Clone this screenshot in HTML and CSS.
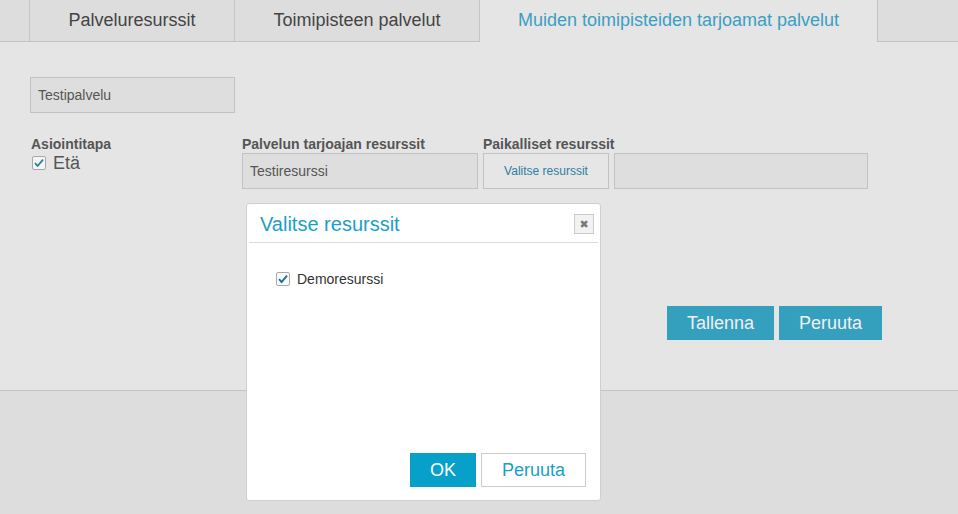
FILE: index.html
```html
<!DOCTYPE html>
<html>
<head>
<meta charset="utf-8">
<link rel="stylesheet" href="styles.css">
</head>
<body>
<div class="tabs">
  <div class="tab-spacer"></div>
  <div class="tab tab-1">Palveluresurssit</div>
  <div class="tab tab-2">Toimipisteen palvelut</div>
  <div class="tab tab-active">Muiden toimipisteiden tarjoamat palvelut</div>
</div>
<div class="panel">
  <div class="field-name">Testipalvelu</div>
  <div class="fields">
    <div class="col col-1">
      <div class="label">Asiointitapa</div>
      <div class="check-row">
        <svg class="cb" width="14" height="14" viewBox="0 0 14 14"><rect x="0.5" y="0.5" width="13" height="13" rx="1.5" fill="#f4f4f4" stroke="#a8a8a8"/><path d="M3 7.2 L5.6 10 L11 3.6" fill="none" stroke="#2a7fa0" stroke-width="1.8"/></svg>
        <span class="eta">Etä</span>
      </div>
    </div>
    <div class="col col-2">
      <div class="label">Palvelun tarjoajan resurssit</div>
      <div class="box box-wide">Testiresurssi</div>
    </div>
    <div class="col col-3">
      <div class="label">Paikalliset resurssit</div>
      <div class="row-3">
        <div class="btn-select">Valitse resurssit</div>
        <div class="box box-empty"></div>
      </div>
    </div>
  </div>
  <div class="actions">
    <div class="btn-main">Tallenna</div>
    <div class="btn-main btn-main-2">Peruuta</div>
  </div>
</div>
<div class="modal">
  <div class="modal-head">
    <span class="modal-title">Valitse resurssit</span>
    <span class="modal-close">✖</span>
  </div>
  <div class="modal-body">
    <div class="check-row2">
      <svg class="cb" width="14" height="14" viewBox="0 0 14 14"><rect x="0.5" y="0.5" width="13" height="13" rx="1.5" fill="#fafafa" stroke="#a8a8a8"/><path d="M3 7.2 L5.6 10 L11 3.6" fill="none" stroke="#1d6f95" stroke-width="1.9"/></svg>
      <span class="demo">Demoresurssi</span>
    </div>
  </div>
  <div class="modal-foot">
    <div class="btn-ok">OK</div>
    <div class="btn-cancel">Peruuta</div>
  </div>
</div>
</body>
</html>
```
FILE: styles.css
```css
html, body {
  margin: 0;
  padding: 0;
}
body {
  background: #dddddd;
  font-family: "Liberation Sans", Arial, sans-serif;
  width: 958px;
  height: 514px;
  overflow: hidden;
  position: relative;
}
.tabs {
  display: flex;
  height: 41px;
  border-bottom: 1px solid #c2c2c2;
  background: #dddddd;
}
.tab-spacer {
  width: 29px;
}
.tab {
  box-sizing: border-box;
  height: 41px;
  border-left: 1px solid #c4c4c4;
  display: flex;
  align-items: center;
  justify-content: center;
  font-size: 18px;
  color: #444;
  padding-bottom: 1px;
}
.tab-1 { width: 205px; }
.tab-2 { width: 245px; }
.tab-active {
  width: 399px;
  height: 42px;
  margin-bottom: -1px;
  background: #e5e5e5;
  border-right: 1px solid #c4c4c4;
  color: #3a9fc2;
  padding-bottom: 2px;
}
.panel {
  box-sizing: border-box;
  height: 349px;
  background: #e5e5e5;
  border-bottom: 1px solid #c2c2ca;
  padding: 35px 0 0 30px;
}
.field-name {
  box-sizing: border-box;
  width: 205px;
  height: 36px;
  background: #dedede;
  border: 1px solid #c2c2c2;
  font-size: 14px;
  color: #555;
  padding-left: 7px;
  line-height: 34px;
}
.fields {
  display: flex;
  margin-top: 22px;
}
.label {
  font-size: 14px;
  font-weight: bold;
  color: #555;
  line-height: 18px;
  height: 18px;
}
.col-1 { width: 211px; padding-left: 1px; }
.col-2 { width: 241px; }
.check-row {
  display: flex;
  align-items: center;
  height: 16px;
  margin-top: 2px;
  padding-left: 1px;
}
.eta {
  font-size: 18px;
  color: #555;
  margin-left: 7px;
  line-height: 16px;
}
.box {
  box-sizing: border-box;
  height: 36px;
  background: #dedede;
  border: 1px solid #c2c2c2;
}
.box-wide {
  width: 236px;
  font-size: 14px;
  color: #555;
  padding-left: 7px;
  line-height: 34px;
}
.row-3 {
  display: flex;
  gap: 5px;
}
.btn-select {
  box-sizing: border-box;
  width: 126px;
  height: 36px;
  border: 1px solid #c2c2c2;
  background: #e6e6e6;
  font-size: 12px;
  color: #2c7fa3;
  text-align: center;
  line-height: 34px;
}
.box-empty { width: 254px; }
.actions {
  display: flex;
  justify-content: flex-end;
  gap: 5px;
  padding-right: 76px;
  margin-top: 117px;
}
.btn-main {
  width: 107px;
  height: 34px;
  background: #35a0be;
  color: #f0f0f2;
  font-size: 18px;
  text-align: center;
  line-height: 34px;
}
.btn-main-2 { width: 103px; }
.modal {
  position: absolute;
  left: 246px;
  top: 203px;
  box-sizing: border-box;
  width: 355px;
  height: 298px;
  background: #ffffff;
  border: 1px solid #cfcfcf;
  border-radius: 3px;
  display: flex;
  flex-direction: column;
}
.modal-head {
  margin: 0 2px;
  height: 38px;
  border-bottom: 1px solid #dadada;
  display: flex;
  align-items: center;
  justify-content: space-between;
  padding: 0 4px 0 11px;
}
.modal-title {
  font-size: 20px;
  color: #1a9fc8;
  margin-top: 2px;
}
.modal-close {
  box-sizing: border-box;
  width: 20px;
  height: 20px;
  border: 1px solid #cccccc;
  background: #f2f2f2;
  color: #777;
  font-size: 11px;
  display: flex;
  align-items: center;
  justify-content: center;
  margin-top: 2px;
  font-family: "DejaVu Sans", sans-serif;
}
.modal-body {
  flex: 1;
  padding: 29px 0 0 29px;
}
.check-row2 {
  display: flex;
  align-items: center;
  height: 14px;
}
.demo {
  font-size: 14px;
  color: #333;
  margin-left: 7px;
}
.modal-foot {
  display: flex;
  justify-content: flex-end;
  gap: 5px;
  padding: 0 14px 13px 0;
}
.btn-ok {
  width: 66px;
  height: 34px;
  background: #06a0c8;
  color: #fff;
  font-size: 18px;
  text-align: center;
  line-height: 34px;
}
.btn-cancel {
  box-sizing: border-box;
  width: 105px;
  height: 34px;
  border: 1px solid #cccccc;
  background: #fff;
  color: #1a9fc8;
  font-size: 18px;
  text-align: center;
  line-height: 32px;
}
```
